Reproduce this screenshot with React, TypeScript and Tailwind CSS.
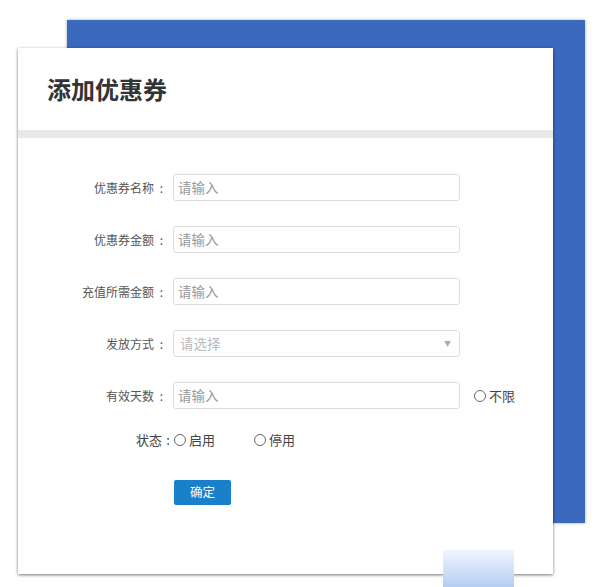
import React from 'react';

const font = { fontFamily: '"Noto Sans CJK SC", "Noto Sans", sans-serif' };

const Radio: React.FC<{ label: string }> = ({ label }) => (
  <span className="flex items-center gap-[3px] text-[13px] text-[#444]">
    <span className="w-[12px] h-[12px] rounded-full border border-[#666] bg-white" />
    {label}
  </span>
);

const Label: React.FC<{ text: string }> = ({ text }) => (
  <label className="w-[151px] flex justify-end items-center text-[12px] text-[#555] shrink-0">
    {text}
    <span className="inline-block w-[15px] text-center">:</span>
  </label>
);

const TextRow: React.FC<{ label: string; children?: React.ReactNode }> = ({ label, children }) => (
  <div className="flex items-center h-[27px]">
    <Label text={label} />
    <div className="w-[287px] h-[27px] ml-[4px] border border-[#dcdcdc] rounded-[3px] bg-white flex items-center px-[4px] text-[13.5px] text-[#999]">
      请输入
    </div>
    {children}
  </div>
);

const App: React.FC = () => {
  return (
    <div className="relative w-[603px] h-[587px] bg-white overflow-hidden" style={font}>
      {/* decorative blue block behind the card */}
      <div className="absolute left-[67px] top-[20px] w-[518px] h-[503px] bg-[#3a69be] shadow-[0_0_3px_rgba(0,0,0,0.35)]" />

      {/* Card */}
      <div className="relative ml-[18px] mt-[48px] w-[535px] h-[526px] bg-white shadow-[0_1px_3px_rgba(0,0,0,0.55)]">
        <div className="h-[82px] flex items-center pl-[29px]">
          <h1 className="text-[24px] font-bold text-[#333]">添加优惠券</h1>
        </div>
        <div className="h-[8px] bg-[#e8e8e8]" />

        <div className="pt-[36px] flex flex-col gap-[25px]">
          <TextRow label="优惠券名称" />
          <TextRow label="优惠券金额" />
          <TextRow label="充值所需金额" />

          <div className="flex items-center h-[27px]">
            <Label text="发放方式" />
            <div className="w-[287px] h-[27px] ml-[4px] border border-[#dcdcdc] rounded-[3px] bg-white flex items-center justify-between px-[6px] text-[13.5px] text-[#bbb]">
              <span>请选择</span>
              <span className="text-[7px] text-[#aaa] mr-[2px]">▼</span>
            </div>
          </div>

          <TextRow label="有效天数">
            <span className="ml-[14px]">
              <Radio label="不限" />
            </span>
          </TextRow>

          <div className="flex items-center h-[18px] -mt-[3px]">
            <label className="w-[156px] flex justify-end items-center text-[13px] text-[#444] shrink-0">
              状态
              <span className="inline-block w-[12px] text-center">:</span>
            </label>
            <span>
              <Radio label="启用" />
            </span>
            <span className="ml-[39px]">
              <Radio label="停用" />
            </span>
          </div>

          <div className="pl-[156px] mt-[4px]">
            <button className="w-[57px] h-[25px] bg-[#1a80c9] rounded-[2px] text-white text-[12.5px]">确定</button>
          </div>
        </div>
      </div>

      {/* light blue gradient tab */}
      <div className="absolute left-[443px] top-[550px] w-[71px] h-[37px] bg-gradient-to-b from-[#f1f6fe] to-[#b5cdf2]" />
    </div>
  );
};

export default App;
